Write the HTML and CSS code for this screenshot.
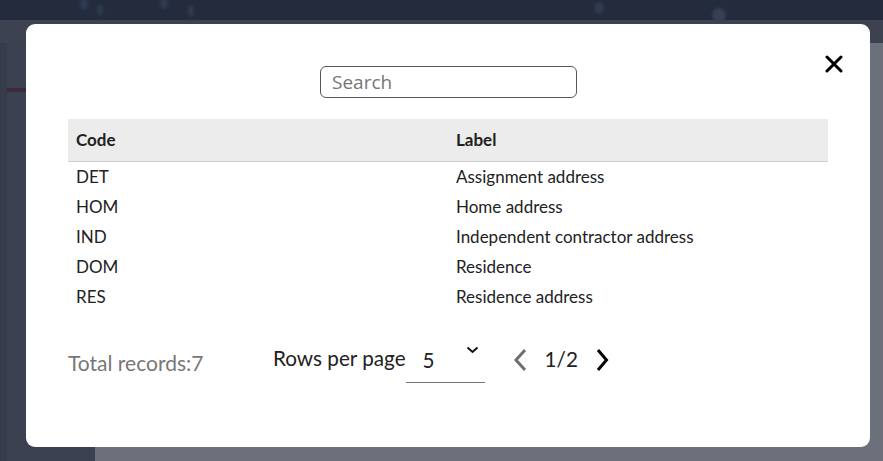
FILE: index.html
```html
<!DOCTYPE html>
<html>
<head>
<meta charset="utf-8">
<link rel="stylesheet" href="styles.css">
</head>
<body>
<div class="page">
  <header class="topbar">
    <span class="glow g1"></span><span class="glow g2"></span><span class="glow g3"></span><span class="glow g4"></span><span class="glow g5"></span><span class="glow g6"></span>
  </header>
  <div class="subbar"></div>
  <div class="body-area">
    <aside class="sidebar"><div class="side-mark"></div></aside>
    <main class="main"></main>
  </div>
</div>

<div class="overlay">
  <div class="modal">
    <button class="close" aria-label="Close">
      <svg width="18" height="18" viewBox="0 0 18 18"><path d="M2 2 L16 16 M16 2 L2 16" stroke="#000" stroke-width="3" stroke-linecap="round"/></svg>
    </button>
    <div class="search-row">
      <input class="search" type="text" placeholder="Search">
    </div>
    <table class="grid">
      <thead>
        <tr><th>Code</th><th>Label</th></tr>
      </thead>
      <tbody>
        <tr><td>DET</td><td>Assignment address</td></tr>
        <tr><td>HOM</td><td>Home address</td></tr>
        <tr><td>IND</td><td>Independent contractor address</td></tr>
        <tr><td>DOM</td><td>Residence</td></tr>
        <tr><td>RES</td><td>Residence address</td></tr>
      </tbody>
    </table>
    <div class="footer">
      <div class="total">Total records:7</div>
      <div class="rows">
        <span class="rows-label">Rows per page</span>
        <div class="select">
          <span class="select-value">5</span>
          <svg class="select-caret" width="13" height="8" viewBox="0 0 13 8"><path d="M1.5 1.5 L6.5 6 L11.5 1.5" fill="none" stroke="#111" stroke-width="2"/></svg>
        </div>
      </div>
      <div class="pager">
        <svg class="nav prev" width="16" height="24" viewBox="0 0 16 24"><path d="M13 2 L4 12 L13 22" fill="none" stroke="#6f6f6f" stroke-width="3"/></svg>
        <span class="page-num">1/2</span>
        <svg class="nav next" width="15" height="24" viewBox="0 0 15 24"><path d="M3 2 L11.5 12 L3 22" fill="none" stroke="#000" stroke-width="3"/></svg>
      </div>
    </div>
  </div>
</div>
</body>
</html>
```

FILE: styles.css
```css
* { box-sizing: border-box; }
html, body { margin: 0; padding: 0; }
body {
  width: 883px;
  height: 461px;
  overflow: hidden;
  font-family: Lato, "Open Sans", sans-serif;
  background: #6b707a;
}
.page {
  display: flex;
  flex-direction: column;
  height: 461px;
}
.topbar {
  height: 20px;
  background: #232b3c;
  position: relative;
  overflow: hidden;
}
.glow {
  position: absolute;
  width: 8px;
  height: 12px;
  border-radius: 50%;
  background: #34425a;
  filter: blur(1.5px);
  opacity: 0.7;
}
.g1 { left: 80px; top: -2px; }
.g2 { left: 97px; top: 4px; width: 6px; }
.g3 { left: 160px; top: -3px; }
.g4 { left: 188px; top: 5px; width: 6px; }
.g5 { left: 594px; top: 2px; width: 10px; }
.g6 { left: 712px; top: 8px; width: 14px; height: 14px; background: #3c4a60; }
.subbar {
  height: 23px;
  background: #3c4250;
}
.body-area {
  flex: 1;
  display: flex;
}
.sidebar {
  width: 95px;
  background: #3b4150;
  border-left: 7px solid #363c49;
  padding-top: 45px;
}
.side-mark {
  width: 20px;
  height: 4px;
  background: #3d2b3b;
}
.main {
  flex: 1;
  background: #6b707a;
}

.overlay {
  position: fixed;
  inset: 0;
}
.modal {
  position: absolute;
  left: 26px;
  top: 24px;
  width: 844px;
  height: 423px;
  background: #fff;
  border-radius: 9px;
  padding: 42px 42px 0 42px;
  color: #222;
}
.close {
  position: absolute;
  right: 27px;
  top: 31px;
  width: 18px;
  height: 18px;
  padding: 0;
  border: 0;
  background: none;
  display: flex;
}
.search-row {
  display: flex;
  justify-content: center;
  padding-left: 1px;
}
.search {
  width: 257px;
  height: 32px;
  border: 1px solid #55565a;
  border-radius: 6px;
  padding: 0 11px;
  font-family: "Open Sans", sans-serif;
  font-size: 19px;
  color: #222;
  outline: none;
}
.search::placeholder { color: #767676; }

.grid {
  margin-top: 21px;
  width: 760px;
  border-collapse: collapse;
  table-layout: fixed;
  font-size: 17px;
}
.grid th {
  background: #ececec;
  height: 42px;
  text-align: left;
  font-weight: 700;
  padding: 0 8px;
  border-bottom: 1px solid #cfcfcf;
  color: #222;
}
.grid td {
  height: 30px;
  padding: 0 8px;
  color: #222;
}

.footer {
  display: flex;
  align-items: flex-start;
  margin-top: 27px;
  height: 46px;
}
.total {
  font-size: 21px;
  line-height: 25px;
  color: #777;
  width: 205px;
  padding-top: 12px;
}
.rows {
  display: flex;
  align-items: flex-start;
  font-size: 20.7px;
  line-height: 25px;
  color: #222;
}
.rows-label {
  padding-top: 8px;
}
.select {
  position: relative;
  width: 79px;
  height: 45px;
  border-bottom: 1px solid #777;
}
.select-value {
  position: absolute;
  left: 17px;
  top: 10px;
}
.select-caret {
  position: absolute;
  right: 6px;
  top: 8px;
}
.pager {
  display: flex;
  align-items: center;
  margin-left: 27px;
  padding-top: 9px;
  font-size: 20.7px;
  line-height: 25px;
}
.page-num {
  color: #222;
  margin-left: 17px;
  margin-right: 17px;
}
```
